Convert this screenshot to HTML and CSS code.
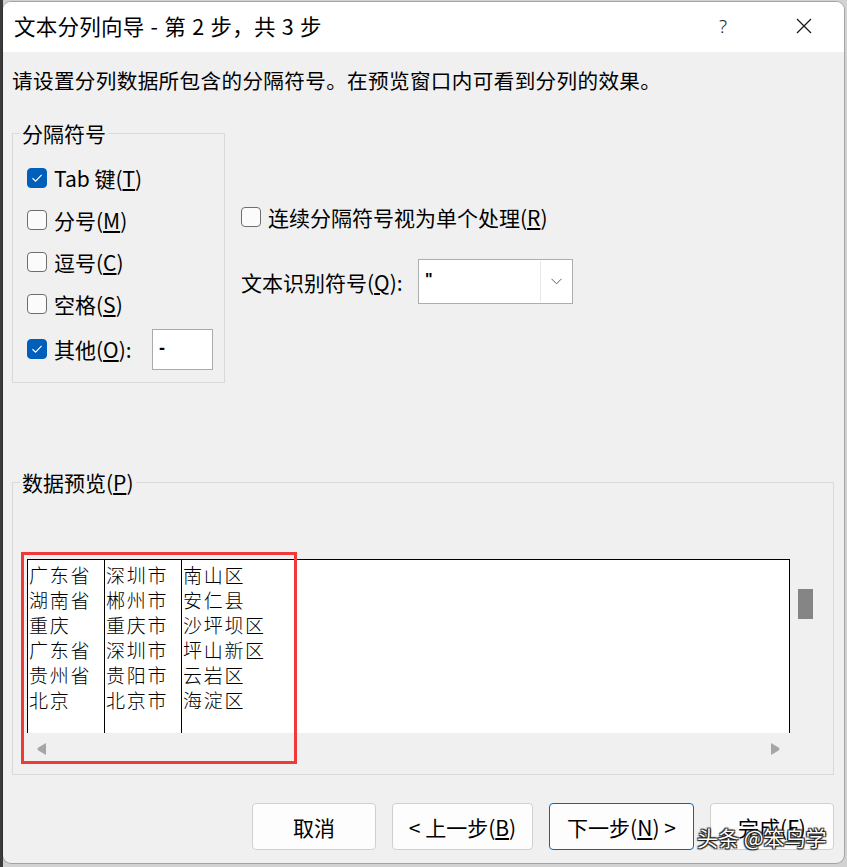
FILE: index.html
```html
<!DOCTYPE html>
<html lang="zh-CN">
<head>
<meta charset="utf-8">
<title>文本分列向导</title>
<link rel="stylesheet" href="styles.css">
</head>
<body>
<div class="window">
  <div class="titlebar">
    <div class="title">文本分列向导 - 第 2 步，共 3 步</div>
    <div class="help">?</div>
    <div class="close">
      <svg width="16" height="16" viewBox="0 0 16 16"><path d="M1 1 L15 15 M15 1 L1 15" stroke="#1a1a1a" stroke-width="1.3" fill="none"/></svg>
    </div>
  </div>
  <div class="content">
    <div class="intro">请设置分列数据所包含的分隔符号。在预览窗口内可看到分列的效果。</div>
    <div class="options">
      <div class="group sep">
        <div class="legend">分隔符号</div>
        <div class="checks">
          <div class="row"><span class="cb on"><svg width="18" height="18" viewBox="0 0 18 18"><path d="M4.5 9.2 L7.6 12.2 L13.6 5.8" stroke="#fff" stroke-width="1.2" fill="none"/></svg></span><span>Tab 键(<u>T</u>)</span></div>
          <div class="row"><span class="cb"></span><span>分号(<u>M</u>)</span></div>
          <div class="row"><span class="cb"></span><span>逗号(<u>C</u>)</span></div>
          <div class="row"><span class="cb"></span><span>空格(<u>S</u>)</span></div>
          <div class="row other"><span class="cb on"><svg width="18" height="18" viewBox="0 0 18 18"><path d="M4.5 9.2 L7.6 12.2 L13.6 5.8" stroke="#fff" stroke-width="1.2" fill="none"/></svg></span><span>其他(<u>O</u>):</span><span class="field">-</span></div>
        </div>
      </div>
      <div class="right">
        <div class="row2"><span class="cb"></span><span>连续分隔符号视为单个处理(<u>R</u>)</span></div>
        <div class="recog">
          <span class="recog-label">文本识别符号(<u>Q</u>):</span>
          <div class="combo">
            <span class="combo-val">"</span>
            <span class="dd"><svg width="11" height="7" viewBox="0 0 11 7"><path d="M0.5 0.8 L5.5 5.8 L10.5 0.8" stroke="#606060" stroke-width="1" fill="none"/></svg></span>
          </div>
        </div>
      </div>
    </div>
    <div class="group preview">
      <div class="legend">数据预览(<u>P</u>)</div>
      <div class="grid">
        <div class="data">
          <div class="col">广东省<br>湖南省<br>重庆<br>广东省<br>贵州省<br>北京</div>
          <div class="col">深圳市<br>郴州市<br>重庆市<br>深圳市<br>贵阳市<br>北京市</div>
          <div class="col last">南山区<br>安仁县<br>沙坪坝区<br>坪山新区<br>云岩区<br>海淀区</div>
        </div>
        <div class="vscroll"><div class="thumb"></div></div>
        <div class="hscroll">
          <svg width="9" height="12" viewBox="0 0 9 12"><path d="M9 0 L9 12 L1 7.2 Q0 6 1 4.8 Z" fill="#a6a6a6"/></svg>
          <svg width="9" height="12" viewBox="0 0 9 12"><path d="M0 0 L0 12 L8 7.2 Q9 6 8 4.8 Z" fill="#a6a6a6"/></svg>
        </div>
      </div>
    </div>
    <div class="buttons">
      <div class="btn w124">取消</div>
      <div class="btn w141">&lt; 上一步(<u>B</u>)</div>
      <div class="btn w145 primary">下一步(<u>N</u>) &gt;</div>
      <div class="btn w124">完成(<u>F</u>)</div>
    </div>
  </div>
  <div class="highlight"></div>
  <div class="watermark">头条 @笨鸟学</div>
</div>
</body>
</html>
```

FILE: styles.css
```css
* { box-sizing: border-box; }
html, body { margin: 0; height: 100%; }
body {
  background: linear-gradient(to right, #3c3c3c 0, #3c3c3c 3px, #d2d2d2 3px);
  padding: 2px 0 0 3px;
  font-family: "Noto Sans CJK SC", "Microsoft YaHei", sans-serif;
  color: #000;
  overflow: hidden;
}
.window {
  position: relative;
  width: 841px;
  height: 861px;
  background: #f0f0f0;
  border-radius: 8px;
  overflow: hidden;
  display: flex;
  flex-direction: column;
  box-shadow: 0 0 0 1px rgba(0,0,0,0.22);
}
.titlebar {
  height: 50px;
  flex: none;
  background: #fff;
  display: flex;
  align-items: center;
  padding-left: 11px;
}
.title { flex: 1; font-size: 21.5px; letter-spacing: 0.25px; word-spacing: 1px; line-height: 28px; margin-top: -3px; white-space: nowrap; }
.help { width: 40px; text-align: center; font-family: "Noto Sans", sans-serif; font-size: 19px; font-weight: 300; color: #222; margin-top: -3px; }
.close { width: 40px; margin-left: 41px; margin-right: 20px; display: flex; justify-content: center; margin-top: -2px; }
.close svg { display: block; }

.content { flex: 1; padding: 0 10px 0 9px; display: flex; flex-direction: column; }
.intro { margin-top: 14px; font-size: 20.6px; letter-spacing: 0.35px; line-height: 28px; white-space: nowrap; }

.options { display: flex; align-items: flex-start; gap: 16px; margin-top: 39px; }
.group { border: 1px solid #d9d9d9; }
.group.sep { width: 213px; height: 250px; flex: none; }
.legend {
  width: fit-content;
  margin: -15px 0 0 7px;
  padding: 0 2px;
  background: #f0f0f0;
  font-size: 21px;
  line-height: 28px;
  white-space: nowrap;
}
.checks { margin-top: 10px; padding-left: 14px; }
.row { display: flex; align-items: center; height: 42px; gap: 7px; font-size: 21px; white-space: nowrap; }
.row.other { height: 48px; padding-right: 11px; }
.field {
  margin-left: auto;
  width: 61px;
  height: 41px;
  background: #fff;
  border: 1px solid #ababab;
  font-family: "Liberation Sans", sans-serif;
  font-weight: bold;
  font-size: 18px;
  line-height: 36px;
  padding-left: 6px;
}
.cb {
  width: 20px;
  height: 20px;
  flex: none;
  border-radius: 4px;
  border: 1px solid #6e6e6e;
  background: #fbfbfb;
  display: flex;
  align-items: center;
  justify-content: center;
}
.cb.on { background: #005fb8; border-color: #005fb8; }
.cb svg { display: block; }

.right { padding-top: 69px; }
.row2 { display: flex; align-items: center; height: 30px; gap: 7px; font-size: 21px; white-space: nowrap; }
.recog { display: flex; align-items: center; margin-top: 27px; height: 45px; font-size: 21px; }
.recog-label { width: 177px; flex: none; white-space: nowrap; }
.combo {
  width: 155px;
  height: 45px;
  border: 1px solid #adadad;
  background: #fff;
  display: flex;
  align-items: center;
}
.combo-val { padding-left: 6px; font-family: "Liberation Sans", sans-serif; font-weight: bold; font-size: 16px; margin-top: -4px; }
.dd {
  width: 31px;
  align-self: stretch;
  margin: 1px 1px 1px auto;
  border-left: 1px solid #e6e6e6;
  display: flex;
  align-items: center;
  justify-content: center;
}
.dd svg { display: block; }

.preview { margin-top: 99px; height: 293px; }
.grid {
  margin: 63px 0 0 14px;
  display: grid;
  grid-template-columns: 763px 40px;
  grid-template-rows: 174px 27px;
}
.data {
  border: 1px solid #000;
  border-bottom: none;
  background: #fff;
  display: flex;
}
.col {
  width: 77px;
  flex: none;
  border-right: 1px solid #000;
  padding: 2px 0 0 1px;
  font-size: 19px;
  letter-spacing: 1.7px;
  line-height: 25px;
  font-weight: 300;
  white-space: nowrap;
  color: #000;
}
.col.last { border-right: none; width: auto; }
.vscroll { padding: 30px 0 0 8px; }
.thumb { width: 15px; height: 30px; background: #858585; }
.hscroll {
  display: flex;
  justify-content: space-between;
  align-items: flex-start;
  padding: 10px 10px 0 10px;
}
.hscroll svg { display: block; }

.buttons { display: flex; justify-content: flex-end; gap: 16px; margin-top: 28px; }
.btn {
  height: 47px;
  border: 1px solid #d0d0d0;
  border-radius: 4px;
  background: #fdfdfd;
  font-size: 21px;
  display: flex;
  align-items: center;
  justify-content: center;
  white-space: nowrap;
}
.btn.primary { border-color: #0067c0; }
.w124 { width: 124px; }
.w141 { width: 141px; }
.w145 { width: 145px; }

.highlight {
  position: absolute;
  left: 18px;
  top: 550px;
  width: 276px;
  height: 212px;
  border: 3px solid #f03a3a;
}
.watermark {
  position: absolute;
  left: 694px;
  top: 821px;
  font-size: 21px;
  line-height: 28px;
  color: #fff;
  white-space: nowrap;
  text-shadow: 0 0 1px #000, 1px 1px 1px #222, -1px -1px 1px #222, 1px -1px 1px #222, -1px 1px 1px #222;
}
```
